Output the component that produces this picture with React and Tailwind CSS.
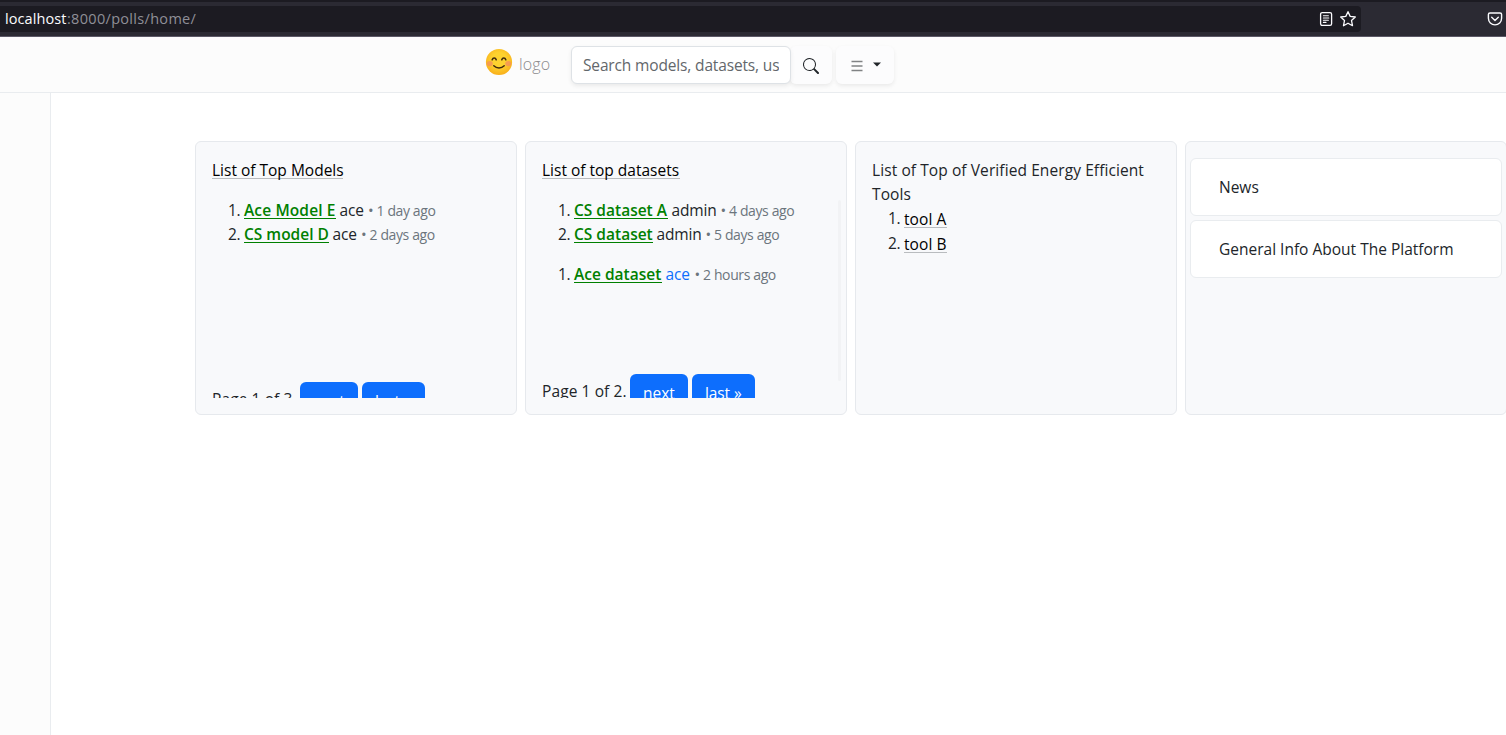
import React from "react";

function Smile() {
  return (
    <svg width="28" height="28" viewBox="0 0 28 28" className="shrink-0">
      <defs>
        <radialGradient id="face" cx="50%" cy="42%" r="55%">
          <stop offset="0.5" stopColor="#fdd22f" />
          <stop offset="1" stopColor="#f9b21d" />
        </radialGradient>
      </defs>
      <circle cx="14" cy="14" r="13.1" fill="url(#face)" />
      <ellipse cx="4.8" cy="15.6" rx="3" ry="2.600" fill="#f4915a" opacity="0.8" />
      <ellipse cx="23.2" cy="15.6" rx="3" ry="2.600" fill="#f4915a" opacity="0.8" />
      <path d="M7.200 11.800c.8-2.400 3.200-2.400 4 0M16.800 11.800c.8-2.400 3.200-2.400 4 0" fill="none" stroke="#422b0d" strokeWidth="1.6" strokeLinecap="round" />
      <path d="M8.800 17.800c2.800 2.900 7.600 2.900 10.400 0" fill="none" stroke="#422b0d" strokeWidth="1.5" strokeLinecap="round" />
    </svg>
  );
}

function BrowserBar() {
  return (
    <div className="flex h-[37px] flex-col border-b border-[#5b5866] bg-[#2b2a33]">
      <div className="h-[2px] shrink-0 bg-[#1c1b22]" />
      <div className="mt-1 flex h-[26px] items-center">
        <div className="flex h-[26px] w-[1361px] items-center rounded-r bg-[#1c1b22] pl-[5px] text-[14.5px] leading-[26px] text-[#8f8f97]">
          <span className="w-[62px] whitespace-nowrap tracking-[0.08px] text-[#fbfbfe]">localhost</span>
          <span className="whitespace-nowrap tracking-[0.31px]">:8000/polls/home/</span>
          <svg className="ml-auto" width="14" height="16" viewBox="0 0 14 16" fill="none" stroke="#fbfbfe" strokeWidth="1.3" strokeLinecap="round">
            <rect x="1.600" y="1.600" width="11" height="12.800" rx="1.600" />
            <path d="M4.400 4.700h5M4.400 7h5.400M4.400 9.200h5M4.400 11.400h2.600" strokeWidth="1.1" />
          </svg>
          <svg className="ml-[6px] mr-[4px]" width="18" height="18" viewBox="0 0 18 18" fill="none" stroke="#fbfbfe" strokeWidth="1.3" strokeLinejoin="round">
            <path d="M9 1.7l2.2 4.7 5.1.6-3.8 3.5 1 5.2L9 13.2l-4.500 2.500 1-5.200L1.700 7l5.100-.6z" />
          </svg>
        </div>
        <svg className="ml-[126px]" width="16" height="16" viewBox="0 0 16 16" fill="none" stroke="#fbfbfe" strokeWidth="1.4" strokeLinecap="round" strokeLinejoin="round">
          <path d="M3 2h10a1.600 1.600 0 0 1 1.600 1.600v3.700a6.600 6.600 0 0 1-13.200 0V3.600A1.600 1.600 0 0 1 3 2z" />
          <path d="M4.700 6.300L8 9.400l3.300-3.100" />
        </svg>
      </div>
    </div>
  );
}

function NavBar() {
  return (
    <nav className="flex h-14 border-b border-[#e9ecef] bg-[#fcfcfc] pl-[485px]">
      <div className="flex w-[86px] pt-[11px]">
        <Smile />
        <span className="ml-[6px] mt-[4px] text-[16px] leading-6 font-light tracking-[0.15px] text-[#8b8b8d]">logo</span>
      </div>
      <div className="mt-[9px] flex h-[38px]">
        <div className="relative z-10 h-[38px] w-[220px] rounded-md border border-[#dee2e6] bg-white px-[11px] shadow-[0_2px_4px_rgba(0,0,0,0.075)]">
          <div className="overflow-hidden whitespace-nowrap text-[15.5px] leading-[37px] tracking-[-0.15px] text-[#63676b]">Search models, datasets, users...</div>
        </div>
        <div className="-ml-px flex w-[42px] items-center justify-center rounded-md bg-[#fcfcfd] shadow-[0_2px_4px_rgba(0,0,0,0.075)]">
          <svg width="16" height="16" viewBox="0 0 16 16" fill="#212529" className="mt-[2px]">
            <path d="M11.742 10.344a6.500 6.500 0 1 0-1.397 1.398h-.001q.044.06.098.115l3.850 3.850a1 1 0 0 0 1.415-1.414l-3.850-3.850a1 1 0 0 0-.115-.100zM12 6.500a5.500 5.500 0 1 1-11 0 5.500 5.500 0 0 1 11 0" />
          </svg>
        </div>
        <div className="ml-1 flex w-[58px] items-center rounded-md bg-[#fcfcfd] pl-[15px] shadow-[0_2px_4px_rgba(0,0,0,0.075)]">
          <svg width="12" height="12" viewBox="0 0 12 12" className="mt-[2px]" fill="none" stroke="#808284" strokeWidth="1.4">
            <path d="M.5 1.500h11M.5 6h11M.5 10.500h11" />
          </svg>
          <svg width="8" height="5" viewBox="0 0 8 5" className="-mt-[2px] ml-[10px]" fill="#212529">
            <path d="M0 .5h8L4 4.500z" />
          </svg>
        </div>
      </div>
    </nav>
  );
}

function Card({ className = "", children }) {
  return (
    <section className={"h-[274px] rounded-md border border-[#e6e9ed] bg-[#f8f9fb] py-4 " + className}>
      {children}
    </section>
  );
}

function Item({ n, name, nameClass, user, userClass, age }) {
  return (
    <li className="flex h-6 whitespace-nowrap leading-[25px]">
      <span className="w-4 shrink-0 tracking-[-0.5px]">{n}.</span>
      <a className={"h-[21px] shrink-0 border-b border-[#008000] font-semibold text-[#008000] " + nameClass}>{name}</a>
      <span className={"ml-[3.500px] shrink-0 " + userClass}>{user}</span>
      <span className="ml-1 w-[5px] shrink-0 text-[15px] text-[#6c757d]">•</span>
      <span className="ml-[3.500px] text-[14px] leading-[26px] tracking-[-0.38px] text-[#6c757d]">{age}</span>
    </li>
  );
}

function Pager({ label }) {
  return (
    <div className="flex h-[38px] items-start whitespace-nowrap leading-[25px]">
      <span className="mt-[5px] w-[88px] shrink-0 tracking-[0.1px]">{label}</span>
      <a className="h-[38px] w-[58px] rounded-md bg-[#0d6efd] pl-[13px] pt-[7px] text-white">next</a>
      <a className="ml-1 h-[38px] w-[63px] rounded-md bg-[#0d6efd] pl-[13px] pt-[7px] tracking-[-0.1px] text-white">last »</a>
    </div>
  );
}

function Tool({ n, name }) {
  return (
    <li className="flex h-[25px] leading-[25px]">
      <span className="w-4 tracking-[-0.5px]">{n}.</span>
      <a className="mt-px h-[21px] w-[43px] whitespace-nowrap border-b border-[#b9bcbf] tracking-[0.1px] text-black">{name}</a>
    </li>
  );
}

export default function App() {
  return (
    <div className="flex h-[735px] w-full flex-col overflow-hidden bg-white font-['Open_Sans','Noto_Sans',sans-serif] text-[15.5px] leading-[25px] text-[#212529]">
      <BrowserBar />
      <NavBar />
      <div className="flex min-h-0 flex-1">
        <aside className="w-[51px] shrink-0 border-r border-[#e9ecef] bg-[#fcfcfc]" />
        <main className="ml-36 mt-12 grid h-[274px] grid-cols-[322px_322px_322px_322px] gap-2">
          <Card className="px-4">
            <div className="flex h-[240px] flex-col overflow-hidden">
              <a className="h-[21px] w-[131px] whitespace-nowrap border-b border-[#b9bcbf] text-black">List of Top Models</a>
              <ol className="mt-[19px] pl-4">
                <Item n={1} name="Ace Model E" nameClass="w-[92px] tracking-[0.12px]" user="ace" userClass="w-[24.500px] font-medium tracking-[-0.1px]" age="1 day ago" />
                <Item n={2} name="CS model D" nameClass="w-[85px]" user="ace" userClass="w-[24.500px] font-medium tracking-[-0.1px]" age="2 days ago" />
              </ol>
              <div className="mt-[136px]">
                <Pager label="Page 1 of 3." />
              </div>
            </div>
          </Card>
          <Card className="flex pl-4">
            <div className="flex h-[240px] w-[288px] flex-col overflow-hidden">
              <a className="h-[21px] w-[138px] whitespace-nowrap border-b border-[#b9bcbf] text-black">List of top datasets</a>
              <ol className="mt-[19px] pl-4">
                <Item n={1} name="CS dataset A" nameClass="w-[94px]" user="admin" userClass="w-[45px] font-medium tracking-[-0.15px]" age="4 days ago" />
                <Item n={2} name="CS dataset" nameClass="w-[79px]" user="admin" userClass="w-[45px] font-medium tracking-[-0.15px]" age="5 days ago" />
              </ol>
              <ol className="mt-4 pl-4">
                <Item n={1} name="Ace dataset" nameClass="w-[88px]" user="ace" userClass="w-[25px] font-medium tracking-[-0.1px] text-[#0d6efd]" age="2 hours ago" />
              </ol>
              <div className="mt-[88px]">
                <Pager label="Page 1 of 2." />
              </div>
            </div>
            <div className="ml-[8px] mt-[42px] h-[181px] w-[3px] rounded-full bg-[#f2f3f5]" />
          </Card>
          <Card className="px-4">
            <p className="whitespace-nowrap leading-6 tracking-[0.09px]">List of Top of Verified Energy Efficient<br />Tools</p>
            <ol className="pl-4">
              <Tool n={1} name="tool A" />
              <Tool n={2} name="tool B" />
            </ol>
          </Card>
          <Card className="flex flex-col gap-1 px-1">
            <div className="h-[58px] w-[312px] whitespace-nowrap rounded-md border border-[#e9ecef] bg-white pl-7 pt-4">News</div>
            <div className="h-[58px] w-[312px] whitespace-nowrap rounded-md border border-[#e9ecef] bg-white pl-7 pt-4">General Info About The Platform</div>
          </Card>
        </main>
      </div>
    </div>
  );
}
